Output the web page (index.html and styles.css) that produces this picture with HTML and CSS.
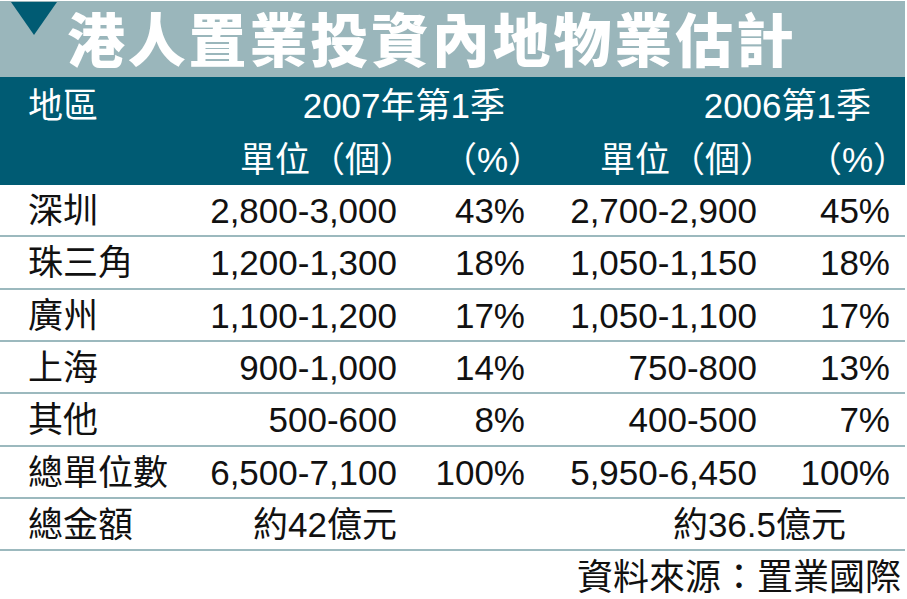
FILE: index.html
```html
<!DOCTYPE html>
<html lang="zh-Hant">
<head>
<meta charset="utf-8">
<title>港人置業投資內地物業估計</title>
<link rel="stylesheet" href="styles.css">
</head>
<body>
<div class="chart">
  <div class="title-band">
    <span class="tri"></span>
    <h1 class="title">港人置業投資內地物業估計</h1>
  </div>
  <div class="head">
    <div class="row head-row1">
      <span class="c1">地區</span>
      <span class="span23">2007年第1季</span>
      <span class="span45">2006第1季</span>
    </div>
    <div class="row head-row2">
      <span class="c2 paren-r">單位（個）</span>
      <span class="c3 paren-r">（%）</span>
      <span class="c4 paren-r">單位（個）</span>
      <span class="c5 paren-r">（%）</span>
    </div>
  </div>
  <div class="body">
    <div class="row data"><span class="c1">深圳</span><span class="c2">2,800-3,000</span><span class="c3">43%</span><span class="c4">2,700-2,900</span><span class="c5">45%</span></div>
    <div class="row data"><span class="c1">珠三角</span><span class="c2">1,200-1,300</span><span class="c3">18%</span><span class="c4">1,050-1,150</span><span class="c5">18%</span></div>
    <div class="row data"><span class="c1">廣州</span><span class="c2">1,100-1,200</span><span class="c3">17%</span><span class="c4">1,050-1,100</span><span class="c5">17%</span></div>
    <div class="row data"><span class="c1">上海</span><span class="c2">900-1,000</span><span class="c3">14%</span><span class="c4">750-800</span><span class="c5">13%</span></div>
    <div class="row data"><span class="c1">其他</span><span class="c2">500-600</span><span class="c3">8%</span><span class="c4">400-500</span><span class="c5">7%</span></div>
    <div class="row data"><span class="c1">總單位數</span><span class="c2">6,500-7,100</span><span class="c3">100%</span><span class="c4">5,950-6,450</span><span class="c5">100%</span></div>
    <div class="row data"><span class="c1">總金額</span><span class="c2">約42億元</span><span class="total2">約36.5億元</span></div>
  </div>
  <div class="source">資料來源：置業國際</div>
</div>
</body>
</html>
```

FILE: styles.css
```css
html, body {
  margin: 0;
  padding: 0;
  background: #ffffff;
}

body {
  font-family: "Liberation Sans", "Noto Sans CJK TC", sans-serif;
  color: #111111;
}

.chart {
  width: 905px;
  padding-top: 1px;
}

.title-band {
  height: 76px;
  background: #9ab6bb;
  display: flex;
  align-items: flex-start;
  position: relative;
}

.tri {
  position: absolute;
  left: 11px;
  top: 1px;
  width: 0;
  height: 0;
  border-left: 23px solid transparent;
  border-right: 23px solid transparent;
  border-top: 33px solid #005b73;
}

.title {
  margin: 2px 0 0 67px;
  font-family: "Noto Sans CJK TC", sans-serif;
  font-weight: 900;
  font-size: 58px;
  line-height: 68px;
  letter-spacing: 2.8px;
  color: #ffffff;
}

.head {
  background: #005b73;
  color: #ffffff;
  height: 108px;
}

.row {
  display: grid;
  grid-template-columns: 200px 197px 128px 232px 133px 15px;
  align-items: center;
  font-size: 35px;
  line-height: 1;
  white-space: nowrap;
}

.head-row1 {
  height: 56px;
  padding-top: 1px;
  box-sizing: border-box;
}

.head-row2 {
  height: 52px;
}

.c1 { grid-column: 1; padding-left: 28px; }
.c2 { grid-column: 2; text-align: right; }
.c3 { grid-column: 3; text-align: right; }
.c4 { grid-column: 4; text-align: right; }
.c5 { grid-column: 5; text-align: right; }

.span23 { grid-column: 2 / 4; text-align: right; padding-right: 20px; }
.span45 { grid-column: 4 / 6; text-align: right; padding-right: 19px; }

.paren-r { margin-right: -18px; }

.data {
  height: 52.33px;
  box-sizing: border-box;
  border-bottom: 2px solid #9cb9be;
  padding-top: 1px;
}

.total2 {
  grid-column: 4 / 6;
  text-align: right;
  padding-right: 44px;
}

.source {
  height: 48px;
  display: flex;
  align-items: center;
  justify-content: flex-end;
  padding-right: 4px;
  padding-top: 5px;
  box-sizing: border-box;
  font-size: 36px;
  line-height: 1;
}
```
